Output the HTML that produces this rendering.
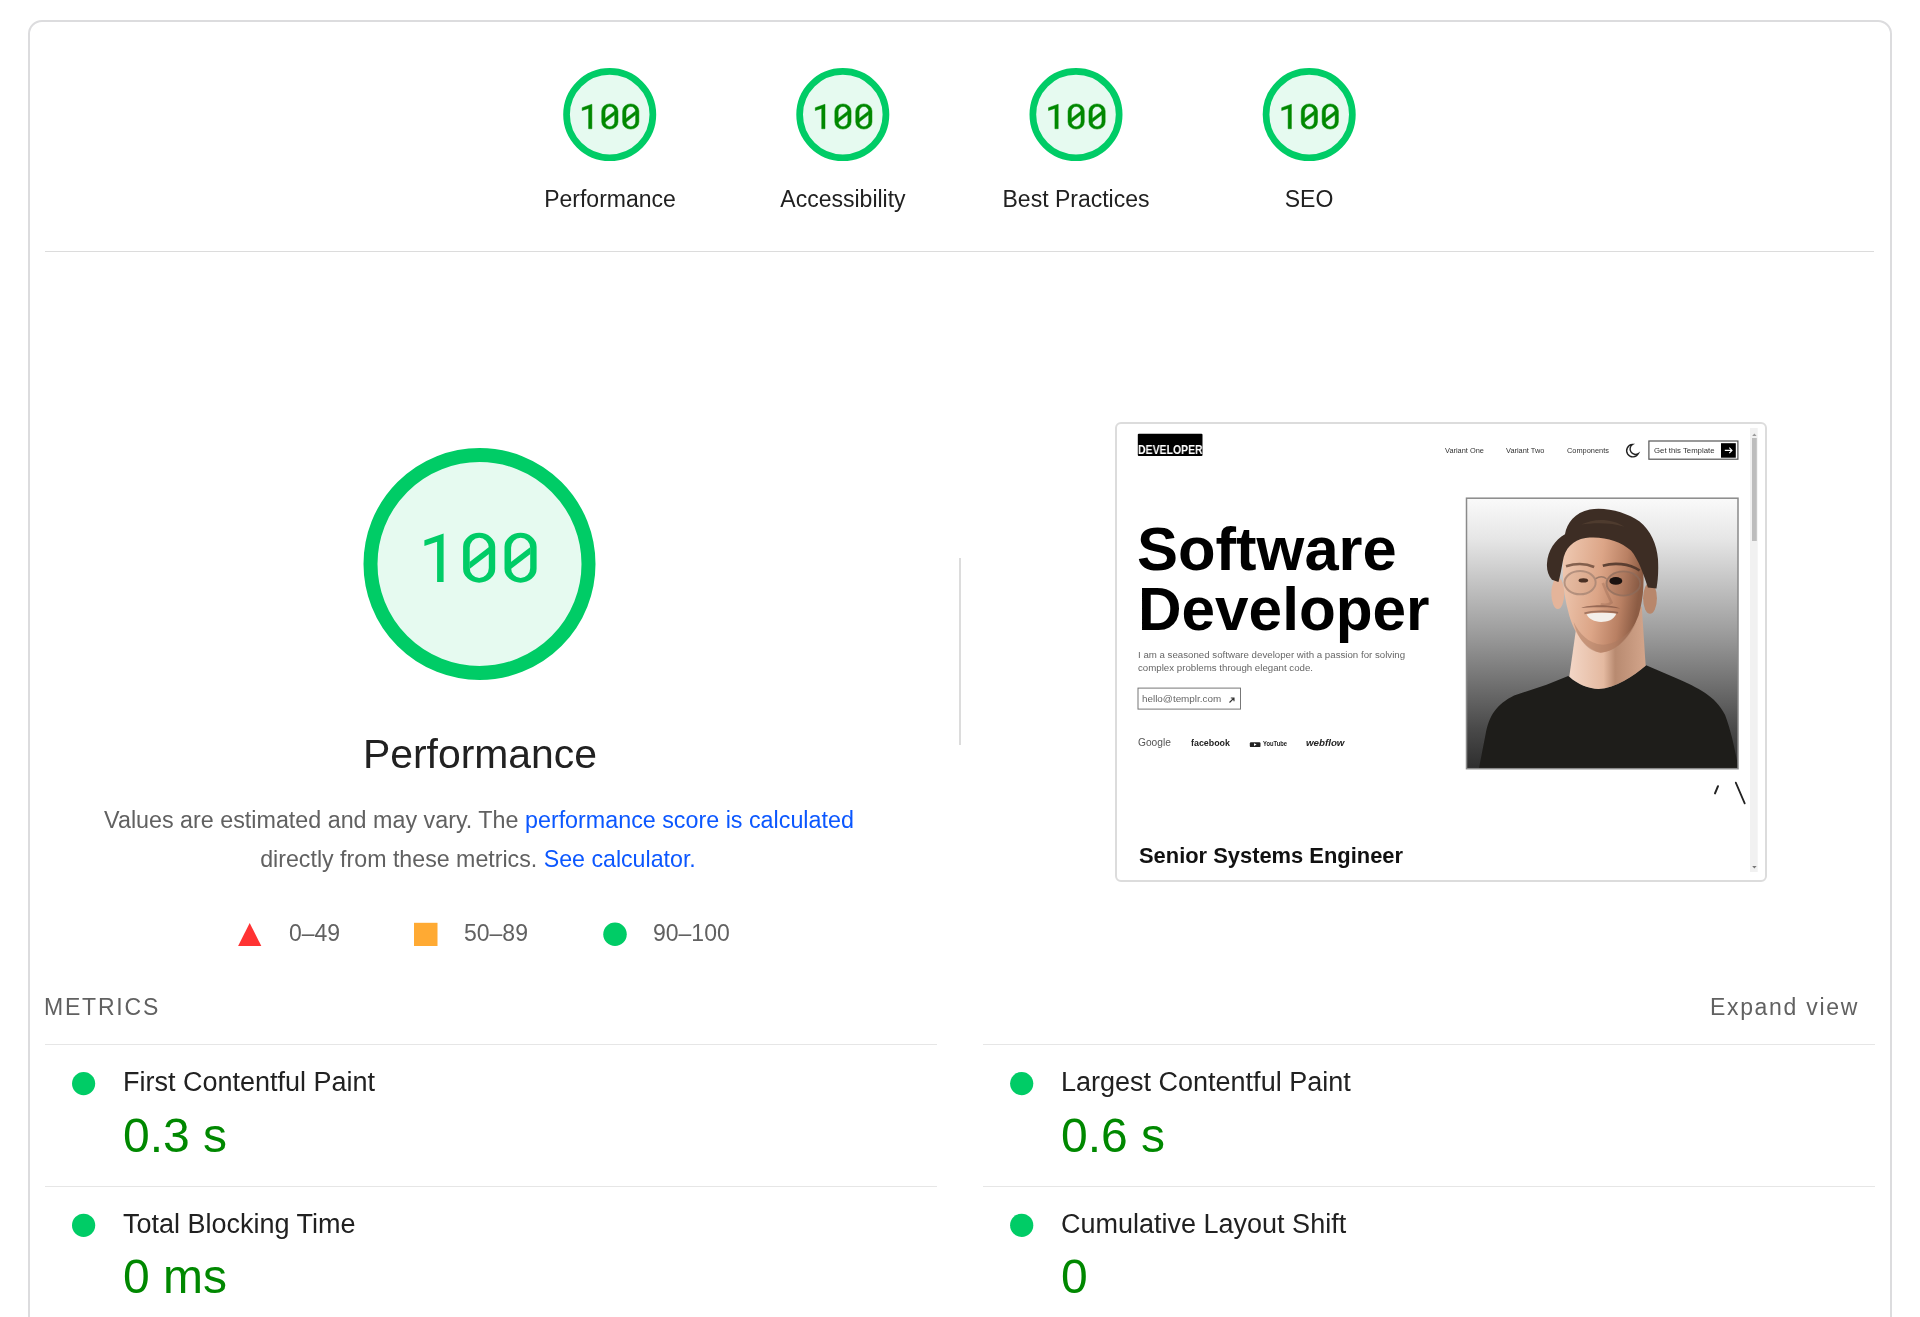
<!DOCTYPE html>
<html><head><meta charset="utf-8"><style>
html,body{margin:0;padding:0;background:#fff;width:1920px;height:1317px;overflow:hidden;}
body{position:relative;font-family:"Liberation Sans", sans-serif;}
.t{position:absolute;white-space:nowrap;line-height:1;will-change:transform;}
.a{position:absolute;}
svg{position:absolute;left:0;top:0;}
</style></head><body>
<div class="a" style="left:27.5px;top:19.5px;width:1860.5px;height:1400px;border:2px solid #dcdcde;border-radius:14px;"></div>
<div class="a" style="left:45px;top:250.5px;width:1829px;height:1.5px;background:#dcdcdc;"></div>
<svg width="1920" height="1317" viewBox="0 0 1920 1317"><circle cx="609.7" cy="114.6" r="43.15" fill="#e6faf0" stroke="#0c6" stroke-width="6.7" /><g fill="#080" stroke="#080" stroke-width="0.5" stroke-linejoin="round"><polygon points="591.90,104.25 591.90,128.75 588.62,128.75 588.62,108.39 582.20,110.56 582.20,107.69" /><path fill-rule="evenodd" d="M609.85,103.90 h0.00 a8.11,7.07 0 0 1 8.11,7.07 v11.06 a8.11,7.07 0 0 1 -8.11,7.07 h-0.00 a8.11,7.07 0 0 1 -8.11,-7.07 v-11.06 a8.11,7.07 0 0 1 8.11,-7.07 Z M609.90,106.42 h0.00 a4.82,5.05 0 0 1 4.82,5.05 v10.15 a4.82,5.05 0 0 1 -4.82,5.05 h-0.00 a4.82,5.05 0 0 1 -4.82,-5.05 v-10.15 a4.82,5.05 0 0 1 4.82,-5.05 Z " /><polygon points="604.98,118.64 614.83,111.07 614.83,114.61 604.98,122.13" /><path fill-rule="evenodd" d="M630.76,103.90 h0.00 a8.11,7.07 0 0 1 8.11,7.07 v11.06 a8.11,7.07 0 0 1 -8.11,7.07 h-0.00 a8.11,7.07 0 0 1 -8.11,-7.07 v-11.06 a8.11,7.07 0 0 1 8.11,-7.07 Z M630.81,106.42 h0.00 a4.82,5.05 0 0 1 4.82,5.05 v10.15 a4.82,5.05 0 0 1 -4.82,5.05 h-0.00 a4.82,5.05 0 0 1 -4.82,-5.05 v-10.15 a4.82,5.05 0 0 1 4.82,-5.05 Z " /><polygon points="625.88,118.64 635.73,111.07 635.73,114.61 625.88,122.13" /></g><circle cx="842.8" cy="114.6" r="43.15" fill="#e6faf0" stroke="#0c6" stroke-width="6.7" /><g fill="#080" stroke="#080" stroke-width="0.5" stroke-linejoin="round"><polygon points="825.00,104.25 825.00,128.75 821.72,128.75 821.72,108.39 815.30,110.56 815.30,107.69" /><path fill-rule="evenodd" d="M842.95,103.90 h0.00 a8.11,7.07 0 0 1 8.11,7.07 v11.06 a8.11,7.07 0 0 1 -8.11,7.07 h-0.00 a8.11,7.07 0 0 1 -8.11,-7.07 v-11.06 a8.11,7.07 0 0 1 8.11,-7.07 Z M843.00,106.42 h0.00 a4.82,5.05 0 0 1 4.82,5.05 v10.15 a4.82,5.05 0 0 1 -4.82,5.05 h-0.00 a4.82,5.05 0 0 1 -4.82,-5.05 v-10.15 a4.82,5.05 0 0 1 4.82,-5.05 Z " /><polygon points="838.08,118.64 847.92,111.07 847.92,114.61 838.08,122.13" /><path fill-rule="evenodd" d="M863.86,103.90 h0.00 a8.11,7.07 0 0 1 8.11,7.07 v11.06 a8.11,7.07 0 0 1 -8.11,7.07 h-0.00 a8.11,7.07 0 0 1 -8.11,-7.07 v-11.06 a8.11,7.07 0 0 1 8.11,-7.07 Z M863.91,106.42 h0.00 a4.82,5.05 0 0 1 4.82,5.05 v10.15 a4.82,5.05 0 0 1 -4.82,5.05 h-0.00 a4.82,5.05 0 0 1 -4.82,-5.05 v-10.15 a4.82,5.05 0 0 1 4.82,-5.05 Z " /><polygon points="858.98,118.64 868.83,111.07 868.83,114.61 858.98,122.13" /></g><circle cx="1076.0" cy="114.6" r="43.15" fill="#e6faf0" stroke="#0c6" stroke-width="6.7" /><g fill="#080" stroke="#080" stroke-width="0.5" stroke-linejoin="round"><polygon points="1058.20,104.25 1058.20,128.75 1054.92,128.75 1054.92,108.39 1048.50,110.56 1048.50,107.69" /><path fill-rule="evenodd" d="M1076.15,103.90 h0.00 a8.11,7.07 0 0 1 8.11,7.07 v11.06 a8.11,7.07 0 0 1 -8.11,7.07 h-0.00 a8.11,7.07 0 0 1 -8.11,-7.07 v-11.06 a8.11,7.07 0 0 1 8.11,-7.07 Z M1076.20,106.42 h0.00 a4.82,5.05 0 0 1 4.82,5.05 v10.15 a4.82,5.05 0 0 1 -4.82,5.05 h-0.00 a4.82,5.05 0 0 1 -4.82,-5.05 v-10.15 a4.82,5.05 0 0 1 4.82,-5.05 Z " /><polygon points="1071.28,118.64 1081.12,111.07 1081.12,114.61 1071.28,122.13" /><path fill-rule="evenodd" d="M1097.06,103.90 h0.00 a8.11,7.07 0 0 1 8.11,7.07 v11.06 a8.11,7.07 0 0 1 -8.11,7.07 h-0.00 a8.11,7.07 0 0 1 -8.11,-7.07 v-11.06 a8.11,7.07 0 0 1 8.11,-7.07 Z M1097.11,106.42 h0.00 a4.82,5.05 0 0 1 4.82,5.05 v10.15 a4.82,5.05 0 0 1 -4.82,5.05 h-0.00 a4.82,5.05 0 0 1 -4.82,-5.05 v-10.15 a4.82,5.05 0 0 1 4.82,-5.05 Z " /><polygon points="1092.18,118.64 1102.03,111.07 1102.03,114.61 1092.18,122.13" /></g><circle cx="1309.2" cy="114.6" r="43.15" fill="#e6faf0" stroke="#0c6" stroke-width="6.7" /><g fill="#080" stroke="#080" stroke-width="0.5" stroke-linejoin="round"><polygon points="1291.40,104.25 1291.40,128.75 1288.12,128.75 1288.12,108.39 1281.70,110.56 1281.70,107.69" /><path fill-rule="evenodd" d="M1309.35,103.90 h0.00 a8.11,7.07 0 0 1 8.11,7.07 v11.06 a8.11,7.07 0 0 1 -8.11,7.07 h-0.00 a8.11,7.07 0 0 1 -8.11,-7.07 v-11.06 a8.11,7.07 0 0 1 8.11,-7.07 Z M1309.40,106.42 h0.00 a4.82,5.05 0 0 1 4.82,5.05 v10.15 a4.82,5.05 0 0 1 -4.82,5.05 h-0.00 a4.82,5.05 0 0 1 -4.82,-5.05 v-10.15 a4.82,5.05 0 0 1 4.82,-5.05 Z " /><polygon points="1304.48,118.64 1314.33,111.07 1314.33,114.61 1304.48,122.13" /><path fill-rule="evenodd" d="M1330.26,103.90 h0.00 a8.11,7.07 0 0 1 8.11,7.07 v11.06 a8.11,7.07 0 0 1 -8.11,7.07 h-0.00 a8.11,7.07 0 0 1 -8.11,-7.07 v-11.06 a8.11,7.07 0 0 1 8.11,-7.07 Z M1330.31,106.42 h0.00 a4.82,5.05 0 0 1 4.82,5.05 v10.15 a4.82,5.05 0 0 1 -4.82,5.05 h-0.00 a4.82,5.05 0 0 1 -4.82,-5.05 v-10.15 a4.82,5.05 0 0 1 4.82,-5.05 Z " /><polygon points="1325.38,118.64 1335.23,111.07 1335.23,114.61 1325.38,122.13" /></g><circle cx="479.5" cy="564" r="109.00" fill="#e6faf0" stroke="#0c6" stroke-width="14" /><g fill="#0c6" stroke="#0c6" stroke-width="0.0" stroke-linejoin="round"><polygon points="443.60,533.50 443.60,582.00 437.10,582.00 437.10,541.70 424.40,546.00 424.40,540.30" /><path fill-rule="evenodd" d="M479.15,532.80 h0.00 a16.05,14.00 0 0 1 16.05,14.00 v21.90 a16.05,14.00 0 0 1 -16.05,14.00 h-0.00 a16.05,14.00 0 0 1 -16.05,-14.00 v-21.90 a16.05,14.00 0 0 1 16.05,-14.00 Z M479.25,537.80 h0.00 a9.55,10.00 0 0 1 9.55,10.00 v20.10 a9.55,10.00 0 0 1 -9.55,10.00 h-0.00 a9.55,10.00 0 0 1 -9.55,-10.00 v-20.10 a9.55,10.00 0 0 1 9.55,-10.00 Z " /><polygon points="469.50,562.00 489.00,547.00 489.00,554.00 469.50,568.90" /><path fill-rule="evenodd" d="M520.55,532.80 h0.00 a16.05,14.00 0 0 1 16.05,14.00 v21.90 a16.05,14.00 0 0 1 -16.05,14.00 h-0.00 a16.05,14.00 0 0 1 -16.05,-14.00 v-21.90 a16.05,14.00 0 0 1 16.05,-14.00 Z M520.65,537.80 h0.00 a9.55,10.00 0 0 1 9.55,10.00 v20.10 a9.55,10.00 0 0 1 -9.55,10.00 h-0.00 a9.55,10.00 0 0 1 -9.55,-10.00 v-20.10 a9.55,10.00 0 0 1 9.55,-10.00 Z " /><polygon points="510.90,562.00 530.40,547.00 530.40,554.00 510.90,568.90" /></g><polygon points="238.1,946 261.3,946 249.7,922.9" fill="#f33" /><rect x="414" y="922.8" width="23.5" height="23.2" fill="#fa3" /><circle cx="615" cy="934.3" r="11.75" fill="#0c6" /><circle cx="83.6" cy="1083.6" r="11.6" fill="#0c6" /><circle cx="83.6" cy="1225.3" r="11.6" fill="#0c6" /><circle cx="1021.7" cy="1083.6" r="11.6" fill="#0c6" /><circle cx="1021.7" cy="1225.3" r="11.6" fill="#0c6" /></svg>
<div class="t" style="left:-389.55px;width:2000px;text-align:center;top:188.03px;font-size:23px;color:#212121;font-weight:400;">Performance</div>
<div class="t" style="left:-157.00px;width:2000px;text-align:center;top:188.03px;font-size:23px;color:#212121;font-weight:400;">Accessibility</div>
<div class="t" style="left:76.10px;width:2000px;text-align:center;top:188.03px;font-size:23px;color:#212121;font-weight:400;">Best Practices</div>
<div class="t" style="left:309.00px;width:2000px;text-align:center;top:188.03px;font-size:23px;color:#212121;font-weight:400;">SEO</div>
<div class="a" style="left:959px;top:558px;width:1.5px;height:187px;background:#dcdcdc;"></div>
<div class="t" style="left:-520.00px;width:2000px;text-align:center;top:733.98px;font-size:40.9px;color:#212121;font-weight:400;">Performance</div>
<div class="t" style="left:-521.50px;width:2000px;text-align:center;top:809.28px;font-size:23.3px;color:#616161;font-weight:400;">Values are estimated and may vary. The <span style="color:#0b57ff">performance score is calculated</span></div>
<div class="t" style="left:-521.70px;width:2000px;text-align:center;top:848.36px;font-size:23.2px;color:#616161;font-weight:400;">directly from these metrics. <span style="color:#0b57ff">See calculator.</span></div>
<div class="t" style="left:288.75px;top:921.78px;font-size:23px;color:#616161;font-weight:400;">0–49</div>
<div class="t" style="left:463.90px;top:921.78px;font-size:23px;color:#616161;font-weight:400;">50–89</div>
<div class="t" style="left:653.00px;top:921.78px;font-size:23px;color:#616161;font-weight:400;">90–100</div>
<div class="t" style="left:44.00px;top:995.53px;font-size:23px;color:#616161;font-weight:400;letter-spacing:1.8px;">METRICS</div>
<div class="t" style="left:-140.80px;width:2000px;text-align:right;top:995.53px;font-size:23px;color:#616161;font-weight:400;letter-spacing:1.7px;">Expand view</div>
<div class="a" style="left:45px;top:1043.5px;width:892px;height:1.5px;background:#e6e6e6;"></div>
<div class="a" style="left:983px;top:1043.5px;width:891.5px;height:1.5px;background:#e6e6e6;"></div>
<div class="a" style="left:45px;top:1185.5px;width:892px;height:1.5px;background:#e6e6e6;"></div>
<div class="a" style="left:983px;top:1185.5px;width:891.5px;height:1.5px;background:#e6e6e6;"></div>
<div class="t" style="left:123.00px;top:1068.64px;font-size:27px;color:#212121;font-weight:400;">First Contentful Paint</div>
<div class="t" style="left:123.00px;top:1111.87px;font-size:48px;color:#080;font-weight:400;">0.3 s</div>
<div class="t" style="left:123.00px;top:1211.34px;font-size:27px;color:#212121;font-weight:400;">Total Blocking Time</div>
<div class="t" style="left:123.00px;top:1253.27px;font-size:48px;color:#080;font-weight:400;">0 ms</div>
<div class="t" style="left:1060.75px;top:1068.64px;font-size:27px;color:#212121;font-weight:400;">Largest Contentful Paint</div>
<div class="t" style="left:1060.75px;top:1111.87px;font-size:48px;color:#080;font-weight:400;">0.6 s</div>
<div class="t" style="left:1060.75px;top:1211.34px;font-size:27px;color:#212121;font-weight:400;">Cumulative Layout Shift</div>
<div class="t" style="left:1060.75px;top:1253.27px;font-size:48px;color:#080;font-weight:400;">0</div>
<div class="a" style="left:1115px;top:422px;width:647.5px;height:455.5px;border:2px solid #dcdcdc;border-radius:6px;background:#fff;"></div>
<svg width="1920" height="1317" viewBox="0 0 1920 1317">
<defs>
<linearGradient id="bg" x1="0" y1="0" x2="0" y2="1">
<stop offset="0" stop-color="#fafafa"/><stop offset="0.15" stop-color="#e6e6e6"/><stop offset="0.5" stop-color="#9c9c9c"/><stop offset="0.85" stop-color="#4a4a4a"/><stop offset="1" stop-color="#2e2e2e"/>
</linearGradient>
<linearGradient id="skin" x1="0" y1="0" x2="1" y2="0">
<stop offset="0" stop-color="#e9c3ac"/><stop offset="0.55" stop-color="#d49d7f"/><stop offset="1" stop-color="#9a6a50"/>
</linearGradient>
<clipPath id="ph"><rect x="1466.5" y="498.2" width="271.5" height="270.5"/></clipPath>
</defs>
<!-- logo -->
<rect x="1137.8" y="433.8" width="64.7" height="22.2" rx="1" fill="#000"/>
<!-- moon -->
<path d="M1632.5,444.5 A6.2,6.2 0 1 0 1638.4,453.5 A5,5 0 0 1 1632.5,444.5 Z" fill="none" stroke="#222" stroke-width="1.4"/>
<!-- button -->
<rect x="1648.9" y="441" width="89" height="18.2" fill="#fff" stroke="#555" stroke-width="1.2"/>
<rect x="1721" y="443.2" width="14.8" height="14.5" fill="#000"/>
<path d="M1724.8,450.4 h7 M1729.3,447.6 l2.7,2.8 l-2.7,2.8" fill="none" stroke="#fff" stroke-width="1.1"/>
<!-- scrollbar -->
<rect x="1750" y="428" width="7.7" height="444" fill="#f1f1f1"/>
<rect x="1752" y="438" width="4.8" height="103" fill="#bdbdbd"/>
<path d="M1752.2,436 l2.2,-2.6 l2.2,2.6 Z" fill="#9a9a9a"/>
<path d="M1752.2,866 l2.2,2.6 l2.2,-2.6 Z" fill="#777"/>
<!-- email button -->
<rect x="1138" y="688.1" width="102.5" height="21" fill="none" stroke="#777" stroke-width="1"/>
<path d="M1229.5,702.5 l4.5,-4.5 M1230.8,698 h3.2 v3.2" fill="none" stroke="#333" stroke-width="1.1"/>
<!-- youtube icon -->
<rect x="1249.8" y="742.2" width="10.7" height="4.9" rx="1.2" fill="#222"/>
<path d="M1254,743.3 l2.6,1.3 l-2.6,1.3 Z" fill="#fff"/>
<!-- photo -->
<g clip-path="url(#ph)">
<rect x="1466.5" y="498.2" width="271.5" height="270.5" fill="url(#bg)"/>
<svg x="1460" y="490" width="285" height="285" viewBox="0 0 1317 1317">
<defs>
<linearGradient id="sk2" x1="0" y1="0" x2="1" y2="0.2">
<stop offset="0" stop-color="#f0cbb4"/><stop offset="0.5" stop-color="#dca587"/><stop offset="0.8" stop-color="#b98063"/><stop offset="1" stop-color="#8c5c44"/>
</linearGradient>
<linearGradient id="nk" x1="0" y1="0" x2="1" y2="0">
<stop offset="0" stop-color="#f3d6c6"/><stop offset="0.45" stop-color="#e4b9a0"/><stop offset="0.6" stop-color="#b88a70"/><stop offset="1" stop-color="#d3a58b"/>
</linearGradient>
</defs>
<!-- shirt -->
<path d="M85,1300 L118,1130 C135,1040 170,990 250,950 L400,900 L500,860 C540,895 590,918 640,920 C720,915 800,860 860,810 L1000,870 C1100,915 1180,950 1225,1040 C1255,1120 1270,1200 1290,1300 Z" fill="#1e1d1a"/>
<!-- neck -->
<path d="M535,650 L505,862 C545,900 595,918 640,920 C720,915 800,860 858,812 L840,540 Z" fill="url(#nk)"/>
<!-- ears -->
<ellipse cx="452" cy="478" rx="30" ry="72" fill="#e4b49a"/>
<ellipse cx="878" cy="500" rx="32" ry="72" fill="#b8876c"/>
<!-- face -->
<path d="M478,300 C470,380 478,480 500,560 C520,650 575,735 650,752 C730,745 790,670 825,580 C850,500 855,400 840,320 C820,250 740,215 650,212 C560,214 490,240 478,300 Z" fill="url(#sk2)"/>
<!-- beard shadow -->
<path d="M525,610 C545,690 590,745 650,752 C720,745 780,690 815,610 C790,650 740,710 660,715 C590,710 550,660 525,610 Z" fill="#a87a62" opacity="0.45"/>
<path d="M560,545 C600,528 700,528 740,548 C700,540 600,540 560,545 Z" fill="#7a5040" opacity="0.7"/>
<!-- hair -->
<path d="M402,340 C405,280 440,230 485,205 C495,150 530,105 600,90 C680,78 770,105 830,145 C880,185 910,250 915,320 C918,380 914,420 908,455 L868,450 C852,400 825,320 790,280 C740,235 660,212 580,222 C520,232 485,270 475,330 C468,370 462,400 455,425 L425,415 C408,395 400,370 402,340 Z" fill="#3d2d24"/>
<path d="M560,160 C620,130 700,130 760,170 C700,150 620,150 560,160 Z" fill="#5a4536" opacity="0.6"/>
<!-- eyebrows -->
<path d="M490,352 C530,340 580,338 620,356" fill="none" stroke="#6a4a3a" stroke-width="12" opacity="0.8"/>
<path d="M660,350 C710,335 780,338 830,372" fill="none" stroke="#4a3228" stroke-width="12" opacity="0.85"/>
<!-- glasses -->
<ellipse cx="555" cy="428" rx="72" ry="54" fill="#c89a80" fill-opacity="0.18" stroke="#a08070" stroke-width="9" stroke-opacity="0.7"/>
<ellipse cx="755" cy="432" rx="78" ry="56" fill="#6a4a3a" fill-opacity="0.15" stroke="#8c6c5c" stroke-width="9" stroke-opacity="0.7"/>
<path d="M627,410 C645,398 662,398 677,410" fill="none" stroke="#9c7a68" stroke-width="7"/>
<!-- eyes -->
<ellipse cx="570" cy="418" rx="22" ry="10" fill="#4a3024"/>
<ellipse cx="720" cy="420" rx="30" ry="18" fill="#1a1210"/>
<!-- nose shadow -->
<path d="M660,430 C675,470 690,500 700,520 C690,530 670,532 650,528" fill="none" stroke="#8a5c48" stroke-width="12" opacity="0.3"/>
<!-- teeth -->
<path d="M585,574 C620,566 690,566 722,572 C712,600 680,610 652,610 C620,608 595,597 585,574 Z" fill="#f4efea"/>
<path d="M575,570 C610,558 700,558 730,568" fill="none" stroke="#7a5242" stroke-width="8" opacity="0.6"/>
</svg>
</g>
<rect x="1466.5" y="498.2" width="271.5" height="270.5" fill="none" stroke="#8a8a8a" stroke-width="1.5"/>
<!-- quote marks -->
<path d="M1718,786.2 L1715,793.4" stroke="#222" stroke-width="2" stroke-linecap="round"/>
<path d="M1735.8,782.7 L1744.7,803.4" stroke="#222" stroke-width="1.8" stroke-linecap="round"/>
</svg>
<div class="t" style="left:1138.00px;top:443.67px;font-size:12.2px;color:#fff;font-weight:700;transform:scaleX(0.86);transform-origin:0 0;">DEVELOPER</div>
<div class="t" style="left:1445.00px;top:447.24px;font-size:7.4px;color:#333;font-weight:400;">Variant One</div>
<div class="t" style="left:1505.50px;top:447.24px;font-size:7.4px;color:#333;font-weight:400;">Variant Two</div>
<div class="t" style="left:1566.70px;top:447.24px;font-size:7.4px;color:#333;font-weight:400;">Components</div>
<div class="t" style="left:1654.00px;top:446.70px;font-size:7.8px;color:#333;font-weight:400;">Get this Template</div>
<div class="t" style="left:1137.00px;top:517.94px;font-size:61.5px;color:#000;font-weight:700;">Software</div>
<div class="t" style="left:1137.50px;top:579.26px;font-size:60.3px;color:#000;font-weight:700;">Developer</div>
<div class="t" style="left:1138.00px;top:649.89px;font-size:9.7px;color:#666;font-weight:400;">I am a seasoned software developer with a passion for solving</div>
<div class="t" style="left:1138.00px;top:663.19px;font-size:9.7px;color:#666;font-weight:400;">complex problems through elegant code.</div>
<div class="t" style="left:1142.00px;top:693.62px;font-size:9.9px;color:#666;font-weight:400;">hello@templr.com</div>
<div class="t" style="left:1137.50px;top:737.97px;font-size:10.2px;color:#555;font-weight:400;">Google</div>
<div class="t" style="left:1190.50px;top:739.07px;font-size:8.9px;color:#222;font-weight:700;">facebook</div>
<div class="t" style="left:1262.50px;top:741.69px;font-size:5.8px;color:#222;font-weight:700;transform:scaleY(1.4);transform-origin:0 80%;">YouTube</div>
<div class="t" style="left:1305.50px;top:738.35px;font-size:9.75px;color:#222;font-weight:700;font-style:italic;">webflow</div>
<div class="t" style="left:1138.50px;top:844.96px;font-size:21.9px;color:#111;font-weight:700;">Senior Systems Engineer</div>
</body></html>
